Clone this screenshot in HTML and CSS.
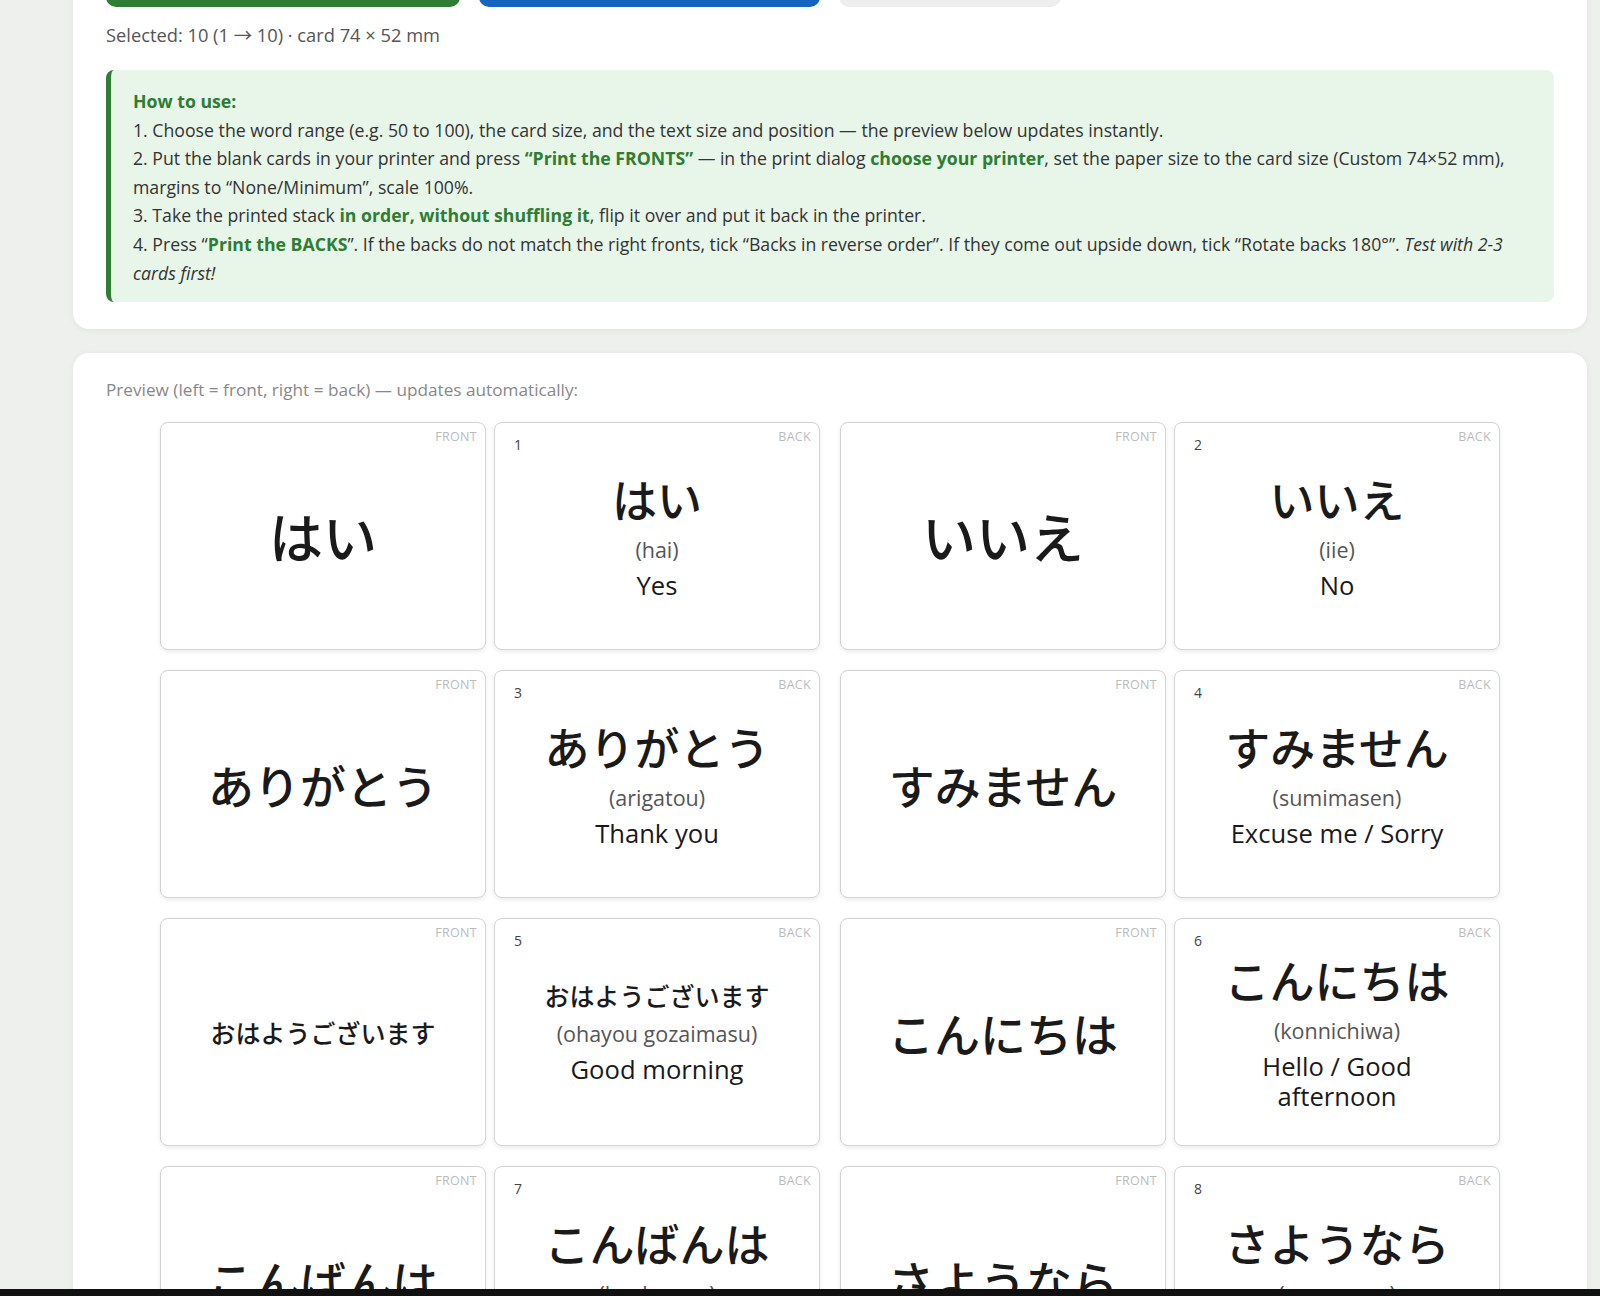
FILE: index.html
```html
<!DOCTYPE html>
<html lang="en">
<head>
  <meta charset="UTF-8">
  <meta name="viewport" content="width=device-width, initial-scale=1.0">
  <title>Japanese Flashcards – Print</title>
  <link rel="stylesheet" href="styles.css">
</head>
<body>

  <div class="page">
    <div class="panel">
      <div class="actions">
        <button type="button" class="btn btn-green">Print the FRONTS</button>
        <button type="button" class="btn btn-blue">Print the BACKS</button>
        <button type="button" class="btn btn-grey">Reset settings</button>
      </div>

      <p class="selected" id="selected">Selected: 10 (1 → 10) · card 74 × 52 mm</p>

      <div class="howto">
        <div class="howto-title">How to use:</div>
        <div>1. Choose the word range (e.g. 50 to 100), the card size, and the text size and position — the preview below updates instantly.</div>
        <div>2. Put the blank cards in your printer and press <b>“Print the FRONTS”</b> — in the print dialog <b>choose your printer</b>, set the paper size to the card size (Custom 74×52 mm), margins to “None/Minimum”, scale 100%.</div>
        <div>3. Take the printed stack <b>in order, without shuffling it</b>, flip it over and put it back in the printer.</div>
        <div>4. Press “<b>Print the BACKS</b>”. If the backs do not match the right fronts, tick “Backs in reverse order”. If they come out upside down, tick “Rotate backs 180°”. <i>Test with 2-3 cards first!</i></div>
      </div>
    </div>

    <div class="panel preview-panel">
      <p class="preview-note">Preview (left = front, right = back) — updates automatically:</p>
      <div class="sheet" id="sheet">
        <!-- cards are generated below -->
      </div>
    </div>
  </div>

  <div class="taskbar"></div>

  <script>
    const words = [
      { jp: 'はい', ro: 'hai', en: 'Yes' },
      { jp: 'いいえ', ro: 'iie', en: 'No' },
      { jp: 'ありがとう', ro: 'arigatou', en: 'Thank you' },
      { jp: 'すみません', ro: 'sumimasen', en: 'Excuse me / Sorry' },
      { jp: 'おはようございます', ro: 'ohayou gozaimasu', en: 'Good morning' },
      { jp: 'こんにちは', ro: 'konnichiwa', en: 'Hello / Good afternoon' },
      { jp: 'こんばんは', ro: 'konbanwa', en: 'Good evening' },
      { jp: 'さようなら', ro: 'sayounara', en: 'Goodbye' },
      { jp: 'おやすみなさい', ro: 'oyasuminasai', en: 'Good night' },
      { jp: 'いただきます', ro: 'itadakimasu', en: "Let's eat" },
    ];

    // fit the japanese word to the card width
    function fitSize(text, max, width) {
      return Math.min(max, Math.floor(width / text.length));
    }

    function buildPreview() {
      const sheet = document.getElementById('sheet');
      sheet.innerHTML = '';
      let row;
      words.forEach((w, i) => {
        if (i % 2 === 0) {
          row = document.createElement('div');
          row.className = 'row';
          sheet.appendChild(row);
        }
        const pair = document.createElement('div');
        pair.className = 'pair';
        pair.innerHTML = `
          <div class="card card-front">
            <span class="side">Front</span>
            <div class="jp" style="font-size:${fitSize(w.jp, 54, 230)}px">${w.jp}</div>
          </div>
          <div class="card card-back">
            <span class="side">Back</span>
            <span class="num">${i + 1}</span>
            <div class="jp" style="font-size:${fitSize(w.jp, 45, 226)}px">${w.jp}</div>
            <div class="reading">(${w.ro})</div>
            <div class="meaning">${w.en}</div>
          </div>
        `;
        row.appendChild(pair);
      });
    }

    window.onload = buildPreview;
  </script>

</body>
</html>
```

FILE: styles.css
```css
body {
  margin: 0;
  background-color: #eef0ee;
  font-family: "Open Sans", "Noto Sans CJK JP", sans-serif;
  color: #333;
}

.page {
  margin: -67px 13px 0 73px;
}

.panel {
  background-color: #fff;
  border-radius: 16px;
  box-shadow: 0 1px 6px rgba(0, 0, 0, 0.06);
  padding: 28px 33px 27px;
  margin-bottom: 24px;
}

.actions {
  display: flex;
  gap: 19px;
}

.btn {
  height: 46px;
  border: none;
  border-radius: 10px;
  font-family: inherit;
  font-size: 16px;
  font-weight: 600;
  color: white;
  cursor: pointer;
}

.btn-green {
  width: 354px;
  background-color: #2e7d32;
}

.btn-blue {
  width: 341px;
  background-color: #1565c0;
}

.btn-grey {
  width: 222px;
  background-color: #eeeeee;
  color: #333;
}

.selected {
  margin: 16px 0 23px;
  font-size: 18.3px;
  line-height: 24px;
  color: #555;
}

/* instructions box */
.howto {
  background-color: #e8f5e9;
  border-left: 5px solid #2e7d32;
  border-radius: 8px;
  padding: 17px 22px 15px;
  font-size: 17.7px;
  line-height: 28.6px;
  color: #333;
}

.howto-title {
  font-weight: 700;
  color: #2e7d32;
}

.howto b {
  color: #2e7d32;
}

/* preview */
.preview-panel {
  padding: 26px 33px 40px;
}

.preview-note {
  margin: 0 0 21px;
  font-size: 17.2px;
  line-height: 22px;
  color: #888;
}

.sheet {
  display: flex;
  flex-direction: column;
  align-items: center;
  gap: 20px;
}

.row {
  display: flex;
  gap: 20px;
}

.pair {
  display: flex;
  gap: 8px;
}

.card {
  position: relative;
  width: 326px;
  height: 228px;
  box-sizing: border-box;
  padding: 0 36px;
  border: 1px solid #d4d4d4;
  border-radius: 8px;
  box-shadow: 0 2px 5px rgba(0, 0, 0, 0.08);
  background-color: #fff;
  display: flex;
  flex-direction: column;
  justify-content: center;
  align-items: center;
  text-align: center;
}

.side {
  position: absolute;
  top: 5px;
  right: 8px;
  font-size: 12.5px;
  letter-spacing: 0.3px;
  text-transform: uppercase;
  color: #bbb;
}

.num {
  position: absolute;
  top: 12px;
  left: 19px;
  font-size: 14px;
  color: #444;
}

.jp {
  font-family: "Noto Sans CJK JP", sans-serif;
  font-weight: 500;
  line-height: 1.2;
  color: #1a1a1a;
  white-space: nowrap;
}

.reading {
  margin-top: 10px;
  font-size: 21.5px;
  line-height: 27px;
  color: #555;
}

.meaning {
  margin-top: 8px;
  font-size: 25.6px;
  line-height: 30px;
  font-weight: 500;
  color: #1a1a1a;
}

.taskbar {
  position: fixed;
  left: 0;
  right: 0;
  bottom: 0;
  height: 7px;
  background-color: #111;
}
```
